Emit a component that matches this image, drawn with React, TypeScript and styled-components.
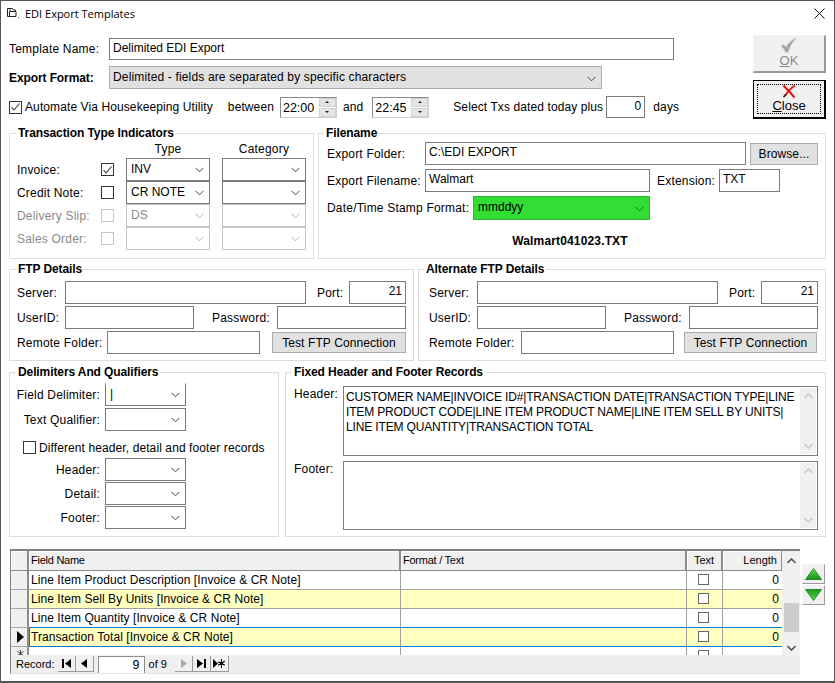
import React from 'react'
import styled, { createGlobalStyle } from 'styled-components'

/*
 * Styles.
 */
const GlobalStyle = createGlobalStyle`
  html, body {
    margin: 0;
    padding: 0;
    background: #fff;
  }
  * {
    box-sizing: border-box;
  }
`

const Window = styled.div`
  width: 835px;
  height: 683px;
  border: 1px solid #555;
  border-bottom-width: 2px;
  background: #fff;
  color: #000;
  font-family: 'Liberation Sans', Arial, sans-serif;
  font-size: 12px;
  overflow: hidden;
`

const TitleBar = styled.div`
  display: flex;
  align-items: center;
  height: 24px;
  padding: 0 9px 0 5px;
`

const TitleText = styled.div`
  margin-left: 5px;
  font-family: 'Open Sans', sans-serif;
  font-size: 11px;
  flex: 1;
`

const Content = styled.div`
  padding: 0 8px;
`

const Top = styled.div`
  display: flex;
  justify-content: space-between;
  margin-top: 9px;
`

const TopForm = styled.div`
  padding-top: 4px;
`

const Row = styled.div<{ $top?: number; $h?: number }>`
  display: flex;
  align-items: center;
  height: ${(p) => p.$h ?? 23}px;
  margin-top: ${(p) => p.$top ?? 0}px;
`

const Label = styled.div<{
  $w?: number
  $ml?: number
  $bold?: boolean
  $off?: boolean
  $right?: boolean
  $tight?: boolean
}>`
  flex: none;
  width: ${(p) => (p.$w ? `${p.$w}px` : 'auto')};
  margin-left: ${(p) => p.$ml ?? 0}px;
  font-weight: ${(p) => (p.$bold ? 700 : 400)};
  color: ${(p) => (p.$off ? '#8a8a8a' : '#000')};
  text-align: ${(p) => (p.$right ? 'right' : 'left')};
  letter-spacing: ${(p) => (p.$bold ? -0.1 : p.$tight ? 0.1 : 0.2)}px;
  white-space: nowrap;
`

const Field = styled.div<{ $w: number; $h?: number; $ml?: number; $right?: boolean }>`
  flex: none;
  width: ${(p) => p.$w}px;
  height: ${(p) => p.$h ?? 23}px;
  margin-left: ${(p) => p.$ml ?? 0}px;
  padding: 2px 3px 0;
  border: 1px solid #7a7a7a;
  background: #fff;
  line-height: 15px;
  text-align: ${(p) => (p.$right ? 'right' : 'left')};
  white-space: nowrap;
  overflow: hidden;
`

const SelectBox = styled.div<{
  $w: number
  $h?: number
  $ml?: number
  $off?: boolean
  $open?: boolean
  $green?: boolean
  $gray?: boolean
}>`
  flex: none;
  display: flex;
  align-items: center;
  justify-content: space-between;
  width: ${(p) => p.$w}px;
  height: ${(p) => p.$h ?? 23}px;
  margin-left: ${(p) => p.$ml ?? 0}px;
  padding: 0 5px ${(p) => (p.$gray ? 1 : 2)}px 4px;
  background: ${(p) => (p.$green ? '#33dd33' : p.$gray ? '#e1e1e1' : '#fff')};
  border: 1px solid ${(p) => (p.$off ? '#c6c6c6' : p.$green ? '#2fb52f' : p.$gray ? '#adadad' : '#7a7a7a')};
  border-top-color: ${(p) => (p.$open ? 'transparent' : '')};
  color: ${(p) => (p.$off ? '#8a8a8a' : '#000')};
  white-space: nowrap;
`

const FormatText = styled.span`
  margin-left: -1px;
  letter-spacing: 0.15px;
`

const Chevron = styled.svg`
  flex: none;
  margin-top: 3px;
`

const Box = styled.div<{ $off?: boolean; $size?: number; $ml?: number; $grid?: boolean }>`
  flex: none;
  display: flex;
  align-items: center;
  justify-content: center;
  width: ${(p) => p.$size ?? 13}px;
  height: ${(p) => p.$size ?? 13}px;
  margin-left: ${(p) => p.$ml ?? 0}px;
  border: 1px solid ${(p) => (p.$off ? '#c6c6c6' : p.$grid ? '#666' : '#333')};
  background: #fff;
`

const SpinField = styled.div<{ $ml: number }>`
  flex: none;
  display: flex;
  width: 57px;
  height: 21px;
  margin-left: ${(p) => p.$ml}px;
  border: 1px solid #8a8a8a;
  border-right-color: #d0d0d0;
  border-bottom-color: #d0d0d0;
  background: #fff;
  line-height: 21px;
  padding-left: 2px;
`

const SpinValue = styled.div`
  flex: 1;
  font-size: 12.5px;
`

const SpinButtons = styled.div`
  display: flex;
  flex-direction: column;
  gap: 1px;
  width: 17px;
`

const SpinPart = styled.div`
  flex: 1;
  display: flex;
  align-items: center;
  justify-content: center;
  background: #e4e4e4;
  border: 1px solid #d2d2d2;
`

const Tick = styled.div<{ $down?: boolean }>`
  width: 0;
  height: 0;
  border-left: 2px solid transparent;
  border-right: 2px solid transparent;
  border-${(p) => (p.$down ? 'top' : 'bottom')}: 2px solid #222;
`

const BigButtons = styled.div`
  display: flex;
  flex-direction: column;
  gap: 7px;
  width: 73px;
  margin-top: 1px;
`

const OkButton = styled.div`
  height: 38px;
  display: flex;
  flex-direction: column;
  align-items: center;
  padding-top: 1px;
  background: #f0f0f0;
  border: 1px solid #f4f4f4;
  border-right: 2px solid #9a9a9a;
  border-bottom: 2px solid #9a9a9a;
  color: #8a8a8a;
  font-size: 13px;
  line-height: 15px;
`

const CloseButton = styled.div`
  height: 39px;
  padding: 3px;
  background: #f0f0f0;
  border: 1px solid #000;
  border-right-width: 2px;
  border-bottom-width: 2px;
`

const CloseInner = styled.div`
  height: 100%;
  display: flex;
  flex-direction: column;
  align-items: center;
  gap: 1px;
  border: 1px dotted #000;
  font-size: 13px;
  line-height: 14px;
`

const Key = styled.span`
  text-decoration: underline;
`

const Panels = styled.div<{ $top: number; $h: number; $left: number; $right: number; $gap: number }>`
  display: grid;
  grid-template-columns: ${(p) => p.$left}px ${(p) => p.$right}px;
  column-gap: ${(p) => p.$gap}px;
  height: ${(p) => p.$h}px;
  margin-top: ${(p) => p.$top}px;
`

const Panel = styled.fieldset`
  margin: 0;
  padding: 0;
  min-width: 0;
  border: 1px solid #dcdcdc;
`

const Legend = styled.legend<{ $ml?: number }>`
  margin-left: ${(p) => p.$ml ?? 6}px;
  padding: 0 2px;
  font-weight: 700;
  line-height: 14px;
  letter-spacing: -0.1px;
`

const TypeGrid = styled.div`
  display: grid;
  grid-template-columns: 84px 25px 84px 84px;
  grid-auto-rows: 23px;
  padding-left: 7px;
  & > :nth-child(4n) {
    margin-left: 12px;
  }
`

const TypeHead = styled.div`
  height: 18px;
  line-height: 19px;
  text-align: center;
  letter-spacing: 0.2px;
`

const TypeHeadRow = styled.div`
  display: grid;
  grid-template-columns: 97px 84px 84px;
  column-gap: 12px;
  padding-left: 7px;
`

const CenterCell = styled.div`
  display: flex;
  align-items: center;
`

const Inner = styled.div<{ $left: number; $top?: number }>`
  padding-left: ${(p) => p.$left}px;
  padding-top: ${(p) => p.$top ?? 0}px;
`

const FlatButton = styled.div<{ $w: number; $h?: number; $ml: number }>`
  flex: none;
  width: ${(p) => p.$w}px;
  height: ${(p) => p.$h ?? 21}px;
  margin-left: ${(p) => p.$ml}px;
  background: #e1e1e1;
  border: 1px solid #adadad;
  line-height: 20px;
  text-align: center;
  letter-spacing: 0.1px;
  white-space: nowrap;
`

const Result = styled.div`
  margin: 14px 4px 0 0;
  font-weight: 700;
  line-height: 14px;
  letter-spacing: 0.15px;
  text-align: center;
`

const FixedRow = styled.div<{ $h: number; $top: number }>`
  display: flex;
  height: ${(p) => p.$h}px;
  margin-top: ${(p) => p.$top}px;
`

const FixedLabel = styled.div`
  width: 49px;
  letter-spacing: 0.2px;
  line-height: 14px;
  margin-top: 1px;
`

const Memo = styled.div`
  flex: none;
  display: flex;
  width: 475px;
  border: 1px solid #7a7a7a;
  background: #fff;
`

const MemoText = styled.div`
  flex: 1;
  padding: 3px 0 0 2px;
  line-height: 15px;
  letter-spacing: -0.15px;
  white-space: nowrap;
`

const MemoBar = styled.div`
  display: flex;
  flex-direction: column;
  justify-content: space-between;
  align-items: center;
  width: 16px;
  margin: 1px;
  padding: 5px 0;
  background: #f0f0f0;
`

const GridSection = styled.div`
  display: flex;
  margin: 12px 0 0 1px;
`

const Table = styled.div`
  width: 790px;
  height: 125px;
`

const TableTop = styled.div`
  display: flex;
  height: 106px;
  border-top: 2px solid #808080;
  border-left: 1px solid #808080;
  overflow: hidden;
`

const TableBody = styled.div`
  flex: 1;
  min-width: 0;
`

const RowGrid = styled.div<{ $yellow?: boolean; $h: number }>`
  display: grid;
  grid-template-columns: 18px 372px 286px 36px 60px;
  height: ${(p) => p.$h}px;
  background: ${(p) => (p.$yellow ? '#ffffc0' : '#fff')};
`

const HeadCell = styled.div<{ $right?: boolean; $center?: boolean }>`
  padding: 0 ${(p) => (p.$right ? 4 : 2)}px 0 2px;
  background: #f0f0f0;
  border-right: 2px solid #8c8c8c;
  border-bottom: 1px solid #8c8c8c;
  box-shadow: inset 1px 1px 0 #fff;
  font-size: 11px;
  line-height: 19px;
  letter-spacing: ${(p) => (p.$right || p.$center ? 0 : -0.25)}px;
  text-align: ${(p) => (p.$right ? 'right' : p.$center ? 'center' : 'left')};
`

const Selector = styled.div<{ $top?: boolean }>`
  display: flex;
  align-items: ${(p) => (p.$top ? 'flex-start' : 'center')};
  justify-content: center;
  padding: ${(p) => (p.$top ? 3 : 0)}px 0 0 2px;
  background: #f0f0f0;
  border-right: 2px solid #8c8c8c;
  border-bottom: 1px solid #a8a8a8;
`

const Cell = styled.div<{ $active?: boolean; $right?: boolean; $center?: boolean }>`
  display: flex;
  align-items: ${(p) => (p.$center ? 'flex-start' : 'center')};
  justify-content: ${(p) => (p.$right ? 'flex-end' : p.$center ? 'center' : 'flex-start')};
  padding: ${(p) => (p.$center ? 3 : 0)}px 3px 1px 2px;
  border-right: 1px solid #a0a0a0;
  border-bottom: 1px solid ${(p) => (p.$active ? '#0078d7' : '#a0a0a0')};
  letter-spacing: 0.07px;
  white-space: nowrap;
  ${(p) =>
    p.$active &&
    `
    margin-top: -1px;
    border-top: 1px solid #0078d7;
    &:nth-child(2) {
      border-left: 1px solid #0078d7;
      padding-left: 1px;
    }
    &:last-child {
      border-right-color: #0078d7;
    }
  `}
`

const ScrollBar = styled.div`
  flex: none;
  display: flex;
  flex-direction: column;
  align-items: center;
  width: 18px;
  padding-top: 7px;
  background: #f0f0f0;
`

const Thumb = styled.div`
  width: 15px;
  height: 29px;
  margin-top: 39px;
  margin-bottom: 13px;
  background: #cdcdcd;
`

const RecordBar = styled.div`
  display: flex;
  align-items: center;
  height: 19px;
  padding-left: 5px;
  background: #eee;
  border-left: 1px solid #808080;
  border-bottom: 1px solid #e2e2e2;
  font-size: 11px;
`

const RecordText = styled.div<{ $ml?: number }>`
  margin-left: ${(p) => p.$ml ?? 0}px;
  white-space: nowrap;
`

const NavButton = styled.div<{ $ml?: number }>`
  display: flex;
  align-items: center;
  justify-content: center;
  width: 18px;
  height: 16px;
  margin-left: ${(p) => p.$ml ?? 0}px;
  background: #f0f0f0;
  border-right: 1px solid #9a9a9a;
  border-bottom: 1px solid #9a9a9a;
`

const RecordInput = styled.div`
  width: 47px;
  height: 17px;
  margin-left: 4px;
  padding-right: 4px;
  background: #fff;
  border-left: 1px solid #8c8c8c;
  border-right: 1px solid #8c8c8c;
  border-top: 1px solid #8c8c8c;
  font-size: 12.5px;
  line-height: 16px;
  text-align: right;
`

const OrderButtons = styled.div`
  display: flex;
  flex-direction: column;
  gap: 1px;
  margin: 15px 0 0 2px;
`

const OrderButton = styled.div`
  display: flex;
  align-items: center;
  justify-content: center;
  width: 23px;
  height: 20px;
  background: #f0f0f0;
  border: 1px solid #f6f6f6;
  border-right: 1px solid #9a9a9a;
  border-bottom: 1px solid #9a9a9a;
`

/*
 * Small drawings.
 */

const ChevronDown = ({ color = '#444' }: { color?: string }) => (
  <Chevron width="9" height="6" viewBox="0 0 9 6">
    <polyline points="0.5,0.8 4.5,4.8 8.5,0.8" fill="none" stroke={color} strokeWidth="1" />
  </Chevron>
)

const BarChevron = ({ up, color }: { up?: boolean; color: string }) => (
  <svg width="9" height="6" viewBox="0 0 9 6">
    <polyline
      points={up ? '0.5,5 4.5,1 8.5,5' : '0.5,1 4.5,5 8.5,1'}
      fill="none"
      stroke={color}
      strokeWidth="1.6"
    />
  </svg>
)

const CheckMark = ({ color = '#333' }: { color?: string }) => (
  <svg width="11" height="10" viewBox="0 0 11 10">
    <polyline points="1.5,5 4,8 9.5,1.5" fill="none" stroke={color} strokeWidth="1.1" />
  </svg>
)

const WindowIcon = () => (
  <svg width="14" height="13" viewBox="0 0 14 13">
    <path d="M1.5 1.5h5l1 1.5h2v1.5" fill="none" stroke="#222" />
    <path d="M1.5 1.5v8h8.5V4.5H3.5v5" fill="none" stroke="#222" />
    <path d="M12 10.5h1M3 3h2" stroke="#555" />
  </svg>
)

const CloseGlyph = () => (
  <svg width="11" height="11" viewBox="0 0 11 11">
    <path d="M0.5 0.5l10 10M10.5 0.5l-10 10" stroke="#111" strokeWidth="1" />
  </svg>
)

const GrayCheck = () => (
  <svg width="18" height="16" viewBox="0 0 18 16">
    <path d="M1 9l2.500-1.500L6 10c2-4 6-7.500 11-9.500-4 3.500-7 8.500-9 15H5.500C5 13 3 11 1 9z" fill="#a4a4a4" stroke="#d4d4d4" strokeWidth="0.5" />
  </svg>
)

const RedCross = () => (
  <svg width="16" height="14" viewBox="0 0 16 14">
    <path d="M2 0.500c3 3 6 6 12 13" fill="none" stroke="#e01010" strokeWidth="2.2" />
    <path d="M14.500 0.500c-4 2-8 7-12 12.500" fill="none" stroke="#e01010" strokeWidth="2" />
    <path d="M2 13l3-3" stroke="#222" strokeWidth="1.4" />
  </svg>
)

const NavIcon = ({ d, color = '#000' }: { d: string; color?: string }) => (
  <svg width="13" height="11" viewBox="0 0 13 11">
    <path d={d} fill={color} />
  </svg>
)

const Arrow = ({ down }: { down?: boolean }) => (
  <svg width="17" height="12" viewBox="0 0 17 12">
    <defs>
      <linearGradient id={down ? 'greenDown' : 'greenUp'} x1="0" y1="0" x2="0" y2="1">
        <stop offset="0" stopColor={down ? '#1f9a1f' : '#5fdc4c'} />
        <stop offset="1" stopColor={down ? '#55d645' : '#149014'} />
      </linearGradient>
    </defs>
    <polygon
      points={down ? '0.5,0.5 16.5,0.5 8.5,11.5' : '8.5,0.5 16.5,11.5 0.5,11.5'}
      fill={`url(#${down ? 'greenDown' : 'greenUp'})`}
      stroke="#0e7a0e"
      strokeWidth="0.8"
    />
  </svg>
)

const NewRowMark = () => (
  <svg width="7" height="7" viewBox="0 0 7 7">
    <path d="M3.500 0v7M0.500 1.500l6 4M6.500 1.500l-6 4" stroke="#333" strokeWidth="0.9" />
  </svg>
)

/*
 * Parts.
 */

const Select = ({ value, off }: { value?: string; off?: boolean }) => (
  <SelectBox $w={84} $off={off}>
    <span>{value}</span>
    <ChevronDown color={off ? '#b0b0b0' : '#444'} />
  </SelectBox>
)

const Spin = ({ value, ml }: { value: string; ml: number }) => (
  <SpinField $ml={ml}>
    <SpinValue>{value}</SpinValue>
    <SpinButtons>
      <SpinPart>
        <Tick />
      </SpinPart>
      <SpinPart>
        <Tick $down />
      </SpinPart>
    </SpinButtons>
  </SpinField>
)

const TypeRow = ({
  label,
  type,
  checked,
  off,
}: {
  label: string
  type?: string
  checked?: boolean
  off?: boolean
}) => (
  <>
    <CenterCell>
      <Label $off={off}>{label}</Label>
    </CenterCell>
    <CenterCell>
      <Box $off={off}>{checked && <CheckMark />}</Box>
    </CenterCell>
    <Select value={type} off={off} />
    <Select off={off} />
  </>
)

const FtpPanel = ({
  title,
  left,
  legendMl,
  remoteLabel,
  buttonW,
  buttonMl,
}: {
  title: string
  left: number
  legendMl?: number
  remoteLabel: number
  buttonW: number
  buttonMl: number
}) => (
  <Panel>
    <Legend $ml={legendMl}>{title}</Legend>
    <Inner $left={left} $top={5}>
      <Row>
        <Label $w={48}>Server:</Label>
        <Field $w={241} />
        <Label $w={32} $ml={11}>
          Port:
        </Label>
        <Field $w={57} $right>
          21
        </Field>
      </Row>
      <Row $top={2}>
        <Label $w={48}>UserID:</Label>
        <Field $w={129} />
        <Label $w={65} $ml={18}>
          Password:
        </Label>
        <Field $w={129} />
      </Row>
      <Row $top={2}>
        <Label $w={remoteLabel}>Remote Folder:</Label>
        <Field $w={153} />
        <FlatButton $w={buttonW} $ml={buttonMl}>
          Test FTP Connection
        </FlatButton>
      </Row>
    </Inner>
  </Panel>
)

const LabelledSelect = ({ label, top, open }: { label: string; top?: number; open?: boolean }) => (
  <Row $top={top}>
    <Label $w={90} $right>
      {label}
    </Label>
    <SelectBox $w={81} $ml={5} $open={open}>
      <span>{open ? '|' : ''}</span>
      <ChevronDown />
    </SelectBox>
  </Row>
)

const rows = [
  { name: 'Line Item Product Description [Invoice & CR Note]' },
  { name: 'Line Item Sell By Units [Invoice & CR Note]', yellow: true },
  { name: 'Line Item Quantity [Invoice & CR Note]' },
  { name: 'Transaction Total [Invoice & CR Note]', yellow: true, active: true },
]

/*
 * Component.
 */

export default function App() {
  return (
    <>
      <GlobalStyle />
      <Window>
        <TitleBar>
          <WindowIcon />
          <TitleText>EDI Export Templates</TitleText>
          <CloseGlyph />
        </TitleBar>
        <Content>
          <Top>
            <TopForm>
              <Row $h={22}>
                <Label $w={100}>Template Name:</Label>
                <Field $w={565} $h={22}>
                  Delimited EDI Export
                </Field>
              </Row>
              <Row $top={6}>
                <Label $w={100} $bold>
                  Export Format:
                </Label>
                <SelectBox $w={493} $gray>
                  <FormatText>Delimited - fields are separated by specific characters</FormatText>
                  <ChevronDown />
                </SelectBox>
              </Row>
              <Row $top={7} $h={22}>
                <Box>
                  <CheckMark />
                </Box>
                <Label $ml={3} $tight>
                  Automate Via Housekeeping Utility
                </Label>
                <Label $ml={15} $tight>
                  between
                </Label>
                <Spin value="22:00" ml={6} />
                <Label $ml={6} $tight>
                  and
                </Label>
                <Spin value="22:45" ml={9} />
                <Label $ml={24} $tight>
                  Select Txs dated today plus
                </Label>
                <Field $w={39} $h={22} $ml={3} $right>
                  0
                </Field>
                <Label $ml={8}>days</Label>
              </Row>
            </TopForm>
            <BigButtons>
              <OkButton>
                <GrayCheck />
                <span>
                  <Key>O</Key>K
                </span>
              </OkButton>
              <CloseButton>
                <CloseInner>
                  <RedCross />
                  <span>
                    <Key>C</Key>lose
                  </span>
                </CloseInner>
              </CloseButton>
            </BigButtons>
          </Top>

          <Panels $top={7} $h={133} $left={305} $right={508} $gap={4}>
            <Panel>
              <Legend>Transaction Type Indicators</Legend>
              <TypeHeadRow>
                <span />
                <TypeHead>Type</TypeHead>
                <TypeHead>Category</TypeHead>
              </TypeHeadRow>
              <TypeGrid>
                <TypeRow label="Invoice:" type="INV" checked />
                <TypeRow label="Credit Note:" type="CR NOTE" />
                <TypeRow label="Delivery Slip:" type="DS" off />
                <TypeRow label="Sales Order:" off />
              </TypeGrid>
            </Panel>
            <Panel>
              <Legend $ml={5}>Filename</Legend>
              <Inner $left={8} $top={2}>
                <Row>
                  <Label $w={98}>Export Folder:</Label>
                  <Field $w={321}>C:\EDI EXPORT</Field>
                  <FlatButton $w={68} $h={22} $ml={4}>
                    Browse...
                  </FlatButton>
                </Row>
                <Row $top={4}>
                  <Label $w={98}>Export Filename:</Label>
                  <Field $w={225}>Walmart</Field>
                  <Label $w={62} $ml={7}>
                    Extension:
                  </Label>
                  <Field $w={61}>TXT</Field>
                </Row>
                <Row $top={4} $h={24}>
                  <Label $w={146}>Date/Time Stamp Format:</Label>
                  <SelectBox $w={177} $h={24} $green>
                    <span>mmddyy</span>
                    <ChevronDown color="#1d6f1d" />
                  </SelectBox>
                </Row>
              </Inner>
              <Result>Walmart041023.TXT</Result>
            </Panel>
          </Panels>

          <Panels $top={3} $h={99} $left={405} $right={408} $gap={4}>
            <FtpPanel title="FTP Details" left={7} remoteLabel={90} buttonW={134} buttonMl={12} />
            <FtpPanel
              title="Alternate FTP Details"
              left={10}
              legendMl={5}
              remoteLabel={92}
              buttonW={133}
              buttonMl={10}
            />
          </Panels>

          <Panels $top={4} $h={172} $left={270} $right={541} $gap={6}>
            <Panel>
              <Legend>Delimiters And Qualifiers</Legend>
              <LabelledSelect label="Field Delimiter:" top={4} open />
              <LabelledSelect label="Text Qualifier:" top={2} />
              <Row $top={6} $h={21}>
                <Box $ml={13}></Box>
                <Label $ml={3} $tight>
                  Different header, detail and footer records
                </Label>
              </Row>
              <LabelledSelect label="Header:" />
              <LabelledSelect label="Detail:" top={1} />
              <LabelledSelect label="Footer:" top={1} />
            </Panel>
            <Panel>
              <Legend>Fixed Header and Footer Records</Legend>
              <Inner $left={8}>
                <FixedRow $h={70} $top={7}>
                  <FixedLabel>Header:</FixedLabel>
                  <Memo>
                    <MemoText>
                      CUSTOMER NAME|INVOICE ID#|TRANSACTION DATE|TRANSACTION TYPE|LINE
                      <br />
                      ITEM PRODUCT CODE|LINE ITEM PRODUCT NAME|LINE ITEM SELL BY UNITS|
                      <br />
                      LINE ITEM QUANTITY|TRANSACTION TOTAL
                    </MemoText>
                    <MemoBar>
                      <BarChevron up color="#c8c8c8" />
                      <BarChevron color="#c8c8c8" />
                    </MemoBar>
                  </Memo>
                </FixedRow>
                <FixedRow $h={69} $top={5}>
                  <FixedLabel>Footer:</FixedLabel>
                  <Memo>
                    <MemoText />
                    <MemoBar>
                      <BarChevron up color="#c8c8c8" />
                      <BarChevron color="#c8c8c8" />
                    </MemoBar>
                  </Memo>
                </FixedRow>
              </Inner>
            </Panel>
          </Panels>

          <GridSection>
            <Table>
              <TableTop>
                <TableBody>
                  <RowGrid $h={20}>
                    <HeadCell />
                    <HeadCell>Field Name</HeadCell>
                    <HeadCell>Format / Text</HeadCell>
                    <HeadCell $center>Text</HeadCell>
                    <HeadCell $right>Length</HeadCell>
                  </RowGrid>
                  {rows.map((row) => (
                    <RowGrid key={row.name} $h={19} $yellow={row.yellow}>
                      <Selector>
                        {row.active && (
                          <svg width="7" height="12" viewBox="0 0 7 12">
                            <polygon points="0,0 7,6 0,12" fill="#000" />
                          </svg>
                        )}
                      </Selector>
                      <Cell $active={row.active}>{row.name}</Cell>
                      <Cell $active={row.active} />
                      <Cell $active={row.active} $center>
                        <Box $size={11} $ml={-2} $grid />
                      </Cell>
                      <Cell $active={row.active} $right>
                        0
                      </Cell>
                    </RowGrid>
                  ))}
                  <RowGrid $h={19}>
                    <Selector $top>
                      <NewRowMark />
                    </Selector>
                    <Cell />
                    <Cell />
                    <Cell $center>
                      <Box $size={11} $ml={-2} $grid />
                    </Cell>
                    <Cell />
                  </RowGrid>
                </TableBody>
                <ScrollBar>
                  <BarChevron up color="#555" />
                  <Thumb />
                  <BarChevron color="#555" />
                </ScrollBar>
              </TableTop>
              <RecordBar>
                <RecordText>Record:</RecordText>
                <NavButton $ml={3}>
                  <NavIcon d="M2 1h2v9H2zM11 1v9L5 5.500z" />
                </NavButton>
                <NavButton>
                  <NavIcon d="M9 1v9L3 5.500z" />
                </NavButton>
                <RecordInput>9</RecordInput>
                <RecordText $ml={4}>of 9</RecordText>
                <NavButton $ml={8}>
                  <NavIcon d="M4 1v9l6-4.500z" color="#a8a8a8" />
                </NavButton>
                <NavButton>
                  <NavIcon d="M2 1v9l6-4.500zM9 1h2v9H9z" />
                </NavButton>
                <NavButton>
                  <NavIcon d="M0 1v9l5-4.500zM8 1h1v3.200l2.600-1.600.5.9L9.500 5.500l2.600 1-.5.9L9 6.800V10H8V6.800L5.400 7.400l-.5-.9 2.600-1-2.600-1 .5-.9L8 4.200z" />
                </NavButton>
              </RecordBar>
            </Table>
            <OrderButtons>
              <OrderButton>
                <Arrow />
              </OrderButton>
              <OrderButton>
                <Arrow down />
              </OrderButton>
            </OrderButtons>
          </GridSection>
        </Content>
      </Window>
    </>
  )
}
